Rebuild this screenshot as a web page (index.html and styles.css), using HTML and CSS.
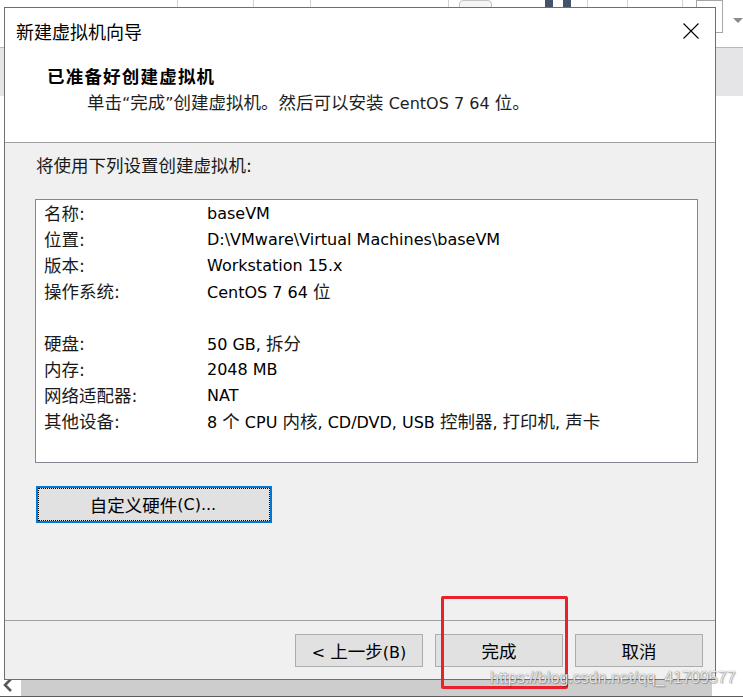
FILE: index.html
```html
<!DOCTYPE html>
<html lang="zh-CN">
<head>
<meta charset="utf-8">
<title>新建虚拟机向导</title>
<link rel="stylesheet" href="styles.css">
</head>
<body>
<div class="desk">
  <div class="toolbar">
    <i class="sep s1"></i>
    <i class="sep s2"></i>
    <i class="sep s3"></i>
    <i class="sep s4"></i>
    <i class="tbox b1"></i>
    <i class="sq q1"></i>
    <i class="sq q2"></i>
    <i class="sep s5"></i>
    <i class="sep s6"></i>
    <i class="tline"></i>
    <i class="sep s7"></i>
    <i class="tbox b3"></i>
    <i class="drop"></i>
  </div>
  <div class="band"></div>
  <div class="page"></div>
  <div class="hscroll">
    <div class="arrow">
      <svg width="12" height="14" viewBox="0 0 12 14"><polyline points="9,1 3,7 9,13" fill="none" stroke="#5a5a5a" stroke-width="2.6"/></svg>
    </div>
    <div class="track"></div>
  </div>

  <div class="dialog">
    <div class="titlebar">
      <span class="title">新建虚拟机向导</span>
      <svg class="close" width="16" height="16" viewBox="0 0 16 16"><path d="M0.5 0.5 L15.5 15.5 M15.5 0.5 L0.5 15.5" stroke="#000" stroke-width="1.1" fill="none"/></svg>
    </div>
    <div class="header">
      <div class="heading">已准备好创建虚拟机</div>
      <div class="sub"><span class="zh">单击</span>“<span class="zh">完成</span>”<span class="zh">创建虚拟机。然后可以安装</span> CentOS 7 64 <span class="zh">位。</span></div>
    </div>
    <div class="body">
      <div class="intro">将使用下列设置创建虚拟机:</div>
      <div class="list">
        <div class="row"><span class="k">名称:</span><span class="v">baseVM</span></div>
        <div class="row"><span class="k">位置:</span><span class="v">D:\VMware\Virtual Machines\baseVM</span></div>
        <div class="row"><span class="k">版本:</span><span class="v">Workstation 15.x</span></div>
        <div class="row"><span class="k">操作系统:</span><span class="v">CentOS 7 64 <span class="zh">位</span></span></div>
        <div class="row"></div>
        <div class="row"><span class="k">硬盘:</span><span class="v">50 GB, <span class="zh">拆分</span></span></div>
        <div class="row"><span class="k">内存:</span><span class="v">2048 MB</span></div>
        <div class="row"><span class="k">网络适配器:</span><span class="v">NAT</span></div>
        <div class="row"><span class="k">其他设备:</span><span class="v">8 <span class="zh">个</span> CPU <span class="zh">内核</span>, CD/DVD, USB <span class="zh">控制器</span>, <span class="zh">打印机</span>, <span class="zh">声卡</span></span></div>
      </div>
      <button class="custom"><span class="focus"><span class="zh">自定义硬件</span>(C)...</span></button>
    </div>
    <div class="footer">
      <button class="btn">&lt; <span class="zh">上一步</span>(B)</button>
      <button class="btn"><span class="zh">完成</span></button>
      <button class="btn"><span class="zh">取消</span></button>
    </div>
  </div>

  <div class="mark"></div>
  <div class="wm">https://blog.csdn.net/qq_41709577</div>
</div>
</body>
</html>
```

FILE: styles.css
```css
html, body {
  margin: 0;
  padding: 0;
  background: #fff;
}
body {
  width: 743px;
  height: 697px;
  overflow: hidden;
  font-family: "DejaVu Sans", "Noto Sans CJK SC", sans-serif;
  font-size: 16px;
  color: #000;
}
.desk {
  position: relative;
  width: 743px;
  height: 697px;
}

/* page behind the dialog */
.toolbar {
  display: flex;
  align-items: flex-start;
  height: 47px;
}
.toolbar i { display: block; flex: none; }
.sep { width: 1px; height: 7px; background: #d2d2d2; }
.s1 { margin-left: 177px; }
.s2 { margin-left: 75px; }
.s3 { margin-left: 56px; }
.s4 { margin-left: 137px; }
.tbox {
  box-sizing: border-box;
  border: 1px solid #c4c4c4;
  background: #f5f5f5;
}
.b1 { margin-left: 10px; width: 33px; height: 12px; border-radius: 4px; }
.sq { width: 8px; height: 7px; background: #44546a; }
.q1 { margin-left: 53px; }
.q2 { margin-left: 10px; }
.s5 { margin-left: 16px; }
.s6 { margin-left: 39px; }
.tline { margin-left: 14px; width: 25px; height: 8px; border-bottom: 1px solid #8a8a8a; box-sizing: border-box; }
.s7 { margin-left: 15px; }
.b3 { margin-left: 13px; width: 27px; height: 33px; background: #fff; border-color: #a6a6a6; }
.drop {
  margin-left: 10px;
  margin-top: 18px;
  width: 0;
  height: 0;
  border-left: 5px solid transparent;
  border-right: 5px solid transparent;
  border-top: 5px solid #8c8c8c;
}
.band {
  height: 48px;
  border-top: 1px solid #b8b8b8;
  background: #e5e5e7;
}
.page { height: 584px; }
.hscroll {
  display: flex;
  height: 16px;
  border-bottom: 1px solid #5c5c5c;
}
.arrow {
  width: 21px;
  display: flex;
  align-items: flex-start;
  padding-left: 2px;
  box-sizing: border-box;
}
.arrow svg { margin-top: -2px; }
.track {
  width: 691px;
  background: #cdcdcd;
}

/* dialog window */
.dialog {
  position: absolute;
  left: 4px;
  top: 7px;
  width: 712px;
  height: 673px;
  box-sizing: border-box;
  border: 1px solid #6e6e6e;
  background: #f0f0f0;
  display: flex;
  flex-direction: column;
}
.zh { font-size: 17.5px; }
.titlebar {
  height: 46px;
  flex: none;
  background: #fff;
  display: flex;
  align-items: center;
  justify-content: space-between;
  padding: 0 16px 0 11px;
}
.title {
  font-family: "Noto Sans CJK SC", sans-serif;
  font-size: 18px;
  line-height: 46px;
  color: #000;
  margin-top: -1px;
}
.close { display: block; margin-top: -1px; }
.header {
  flex: none;
  background: #fff;
  padding: 10px 0 26px 42px;
  border-bottom: 1px solid #a0a0a0;
}
.heading {
  font-family: "Noto Sans CJK SC", sans-serif;
  font-weight: bold;
  font-size: 17.5px;
  letter-spacing: 1.2px;
  line-height: 24px;
  color: #000;
}
.sub {
  margin-top: 3px;
  padding-left: 40px;
  line-height: 24px;
  color: #1e1e1e;
}
.body {
  flex: 1;
  padding: 11px 17px 0 30px;
}
.intro {
  margin-left: 1px;
  font-size: 17.5px;
  line-height: 24px;
  color: #1a1a1a;
}
.list {
  margin-top: 21px;
  height: 264px;
  box-sizing: border-box;
  border: 1px solid #828790;
  background: #fff;
  padding: 1px 0 0 8px;
}
.row {
  display: flex;
  height: 26px;
  line-height: 26px;
  white-space: nowrap;
}
.k {
  width: 163px;
  flex: none;
  font-size: 17.5px;
  color: #1a1a1a;
}
.v { color: #000; }
.v .zh { color: #1a1a1a; }
.custom {
  display: block;
  margin: 23px 0 0 1px;
  width: 236px;
  height: 37px;
  padding: 0;
  border: 2px solid #0078d7;
  background: #e1e1e1;
  font: inherit;
  color: #000;
}
.custom .focus {
  display: flex;
  align-items: center;
  justify-content: center;
  height: 100%;
  box-sizing: border-box;
  border: 1px dotted #000;
  padding-right: 2px;
}
.footer {
  flex: none;
  height: 59px;
  box-sizing: border-box;
  border-top: 1px solid #a0a0a0;
  display: flex;
  justify-content: flex-end;
  align-items: flex-start;
  gap: 12px;
  padding: 13px 12px 0 0;
}
.btn {
  width: 128px;
  height: 33px;
  padding: 0;
  border: 1px solid #adadad;
  background: #e1e1e1;
  font: inherit;
  color: #000;
}

/* annotations drawn over the screenshot */
.mark {
  position: absolute;
  left: 441px;
  top: 596px;
  width: 127px;
  height: 93px;
  box-sizing: border-box;
  border: 3px solid #e8212b;
  border-radius: 2px;
}
.wm {
  position: absolute;
  left: 490px;
  top: 669px;
  font-family: "Liberation Sans", sans-serif;
  font-size: 16px;
  line-height: 18px;
  color: rgba(255, 255, 255, 0.85);
  text-shadow: 0 0 1px rgba(80, 80, 80, 0.9), 1px 1px 1px rgba(0, 0, 0, 0.25);
  white-space: nowrap;
}
```
